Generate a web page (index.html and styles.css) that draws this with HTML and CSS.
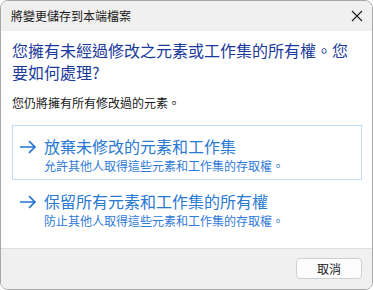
FILE: index.html
```
<!DOCTYPE html>
<html>
<head>
    <title>將變更儲存到本端檔案</title>
    <link rel="stylesheet" href="styles.css">
</head>
<body>
    <div class="window">
        <div class="titlebar">
            <span class="title">將變更儲存到本端檔案</span>
            <svg class="close" width="12" height="12" viewBox="0 0 12 12">
                <path d="M1 1 L11 11 M11 1 L1 11" stroke="#1a1a1a" stroke-width="1.1" fill="none"/>
            </svg>
        </div>

        <div class="content">
            <h1 class="instruction">您擁有未經過修改之元素或工作集的所有權。您要如何處理?</h1>
            <p class="note">您仍將擁有所有修改過的元素。</p>

            <!-- command links -->
            <div class="cmd focused">
                <svg class="arrow" width="18" height="14" viewBox="0 0 18 14">
                    <path d="M1 7 H16 M10 1.2 L16 7 L10 12.8" stroke="#1f74d4" stroke-width="1.6" fill="none"/>
                </svg>
                <div class="cmd-text">
                    <div class="cmd-title">放棄未修改的元素和工作集</div>
                    <div class="cmd-sub">允許其他人取得這些元素和工作集的存取權。</div>
                </div>
            </div>
            <div class="cmd">
                <svg class="arrow" width="18" height="14" viewBox="0 0 18 14">
                    <path d="M1 7 H16 M10 1.2 L16 7 L10 12.8" stroke="#1f74d4" stroke-width="1.6" fill="none"/>
                </svg>
                <div class="cmd-text">
                    <div class="cmd-title">保留所有元素和工作集的所有權</div>
                    <div class="cmd-sub">防止其他人取得這些元素和工作集的存取權。</div>
                </div>
            </div>
        </div>

        <div class="footer">
            <button class="btn">取消</button>
        </div>
    </div>
</body>
</html>
```

FILE: styles.css
```
html, body {
    margin: 0;
    padding: 0;
    background: #ffffff;
}

body {
    font-family: "Noto Sans CJK TC", "Noto Sans", sans-serif;
    width: 373px;
    height: 290px;
}

.window {
    box-sizing: border-box;
    width: 373px;
    height: 290px;
    border: 1px solid #a8a8a8;
    border-radius: 8px;
    overflow: hidden;
    display: flex;
    flex-direction: column;
    background: #ffffff;
}

.titlebar {
    height: 30px;
    background: #f0f0f0;
    display: flex;
    align-items: center;
    justify-content: space-between;
    padding: 0 9px 0 10px;
    flex-shrink: 0;
}
.title {
    font-size: 12px;
    color: #1a1a1a;
    line-height: 16px;
}
.close {
    display: block;
}

.content {
    flex: 1;
    padding: 8px 10px 0 11px;
}
.instruction {
    margin: 0;
    font-size: 16px;
    font-weight: normal;
    line-height: 22px;
    color: #1a3a9c;
    width: 340px;
}
.note {
    margin: 12px 0 14px 0;
    font-size: 12px;
    line-height: 16px;
    color: #1a1a1a;
}

.cmd {
    display: flex;
    align-items: flex-start;
    border: 1px solid transparent;
    padding: 9px 6px 4px 6px;
    width: 336px;
}
.cmd.focused {
    border-color: #c4dcf2;
}
.arrow {
    margin-top: 5px;
    margin-right: 7px;
    flex-shrink: 0;
}
.cmd-title {
    font-size: 16px;
    line-height: 22px;
    color: #2a7ad2;
}
.cmd-sub {
    font-size: 12px;
    line-height: 18px;
    color: #2f7ad6;
}

.footer {
    height: 41px;
    background: #f0f0f0;
    border-top: 1px solid #dedede;
    display: flex;
    justify-content: flex-end;
    align-items: flex-start;
    padding: 9px 10px 0 0;
    box-sizing: border-box;
    flex-shrink: 0;
}
.btn {
    width: 66px;
    height: 21px;
    background: #fdfdfd;
    border: 1px solid #d0d0d0;
    border-radius: 4px;
    font-family: "Noto Sans CJK TC", sans-serif;
    font-size: 12px;
    color: #1a1a1a;
    padding: 0;
    line-height: 18px;
}
```
